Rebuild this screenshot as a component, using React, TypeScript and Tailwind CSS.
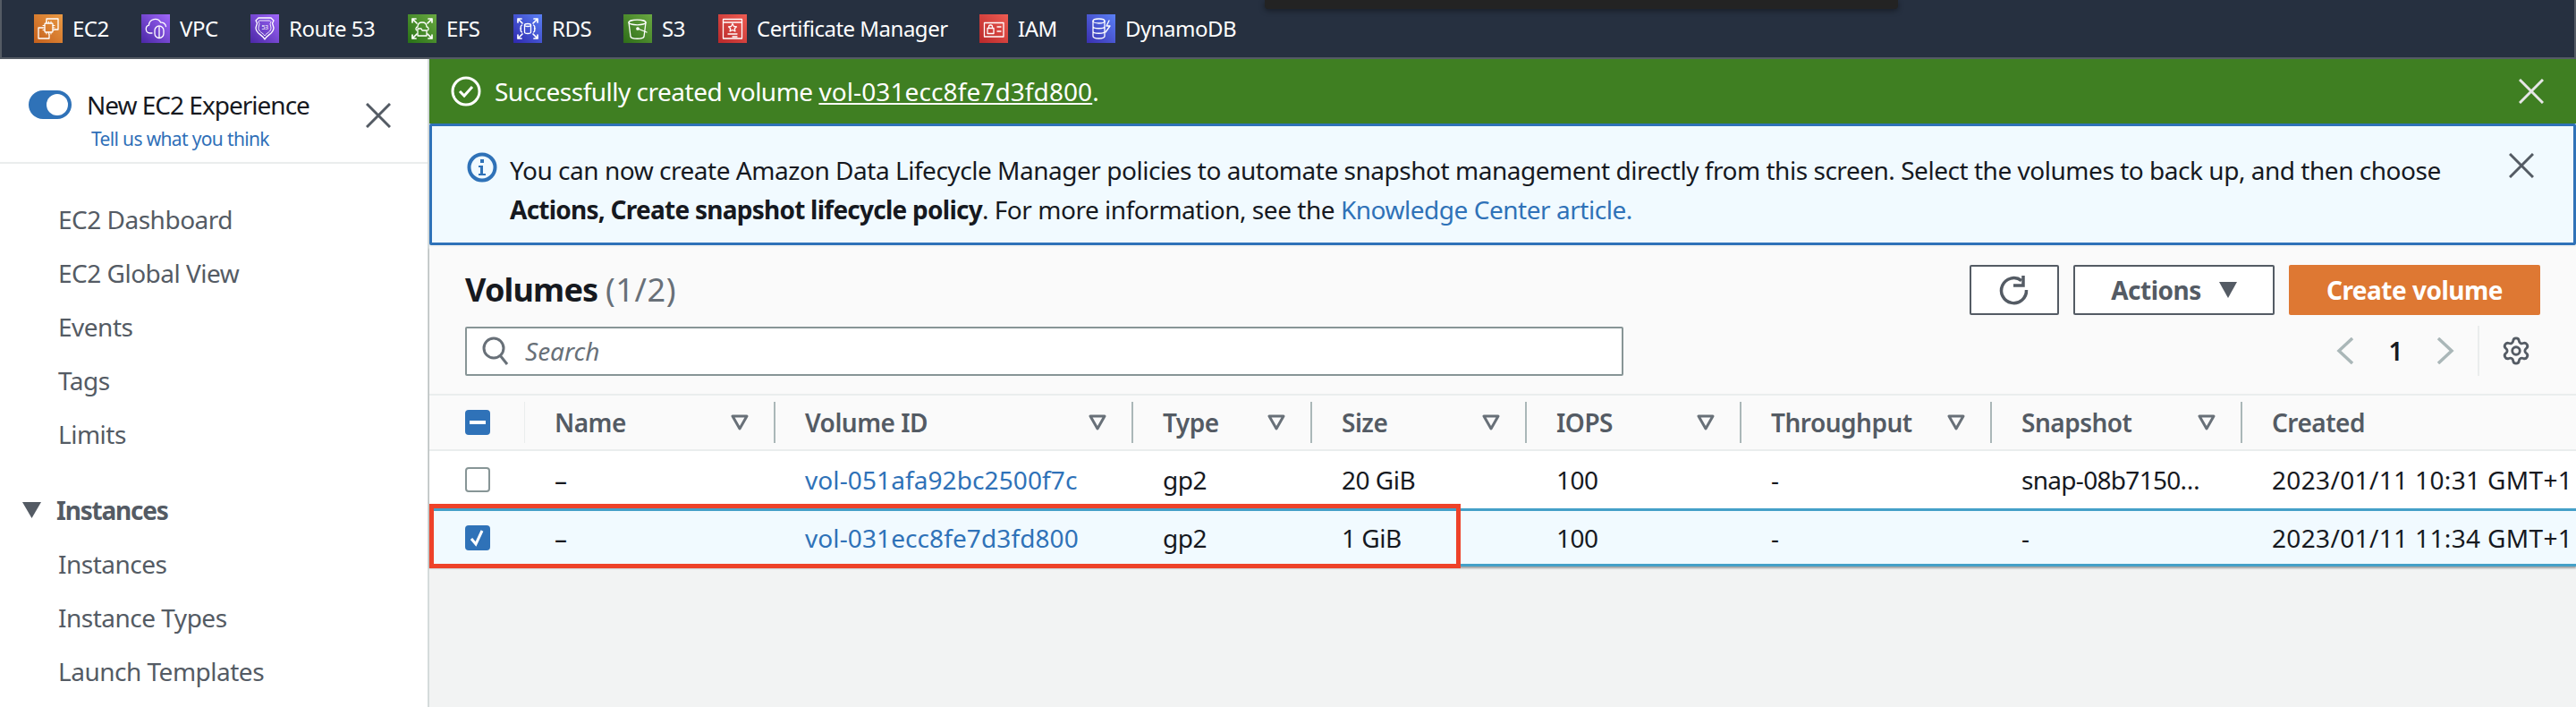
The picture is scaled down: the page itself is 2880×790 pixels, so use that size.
import React from "react";
import { Settings } from "lucide-react";

function Svc({ id, from, to, children }: { id: string; from: string; to: string; children: React.ReactNode }) {
  return (
    <svg width="32" height="32" viewBox="0 0 32 32" className="shrink-0">
      <defs>
        <linearGradient id={id} x1="0" y1="1" x2="1" y2="0">
          <stop offset="0" stopColor={from} />
          <stop offset="1" stopColor={to} />
        </linearGradient>
      </defs>
      <rect width="32" height="32" fill={`url(#${id})`} />
      <g fill="none" stroke="#fff" strokeWidth="1.3" strokeLinejoin="round" strokeLinecap="round">
        {children}
      </g>
    </svg>
  );
}

const Arrows = () => (
  <g strokeWidth="1.7">
    <path d="M5 5l5 5M5 5h4M5 5v4" />
    <path d="M27 5l-5 5M27 5h-4M27 5v4" />
    <path d="M5 27l5-5M5 27h4M5 27v-4" />
    <path d="M27 27l-5-5M27 27h-4M27 27v-4" />
  </g>
);

const services: { name: string; id: string; from: string; to: string; w: string; art: React.ReactNode }[] = [
  { name: "EC2", id: "a1", from: "#c5601c", to: "#ea9a44", w: "w-[120px]", art: (<><path d="M10 15H5v12h12v-5" /><path d="M14 9V5h13v12h-4" /><rect x="12" y="10" width="9" height="10" rx="1" /><path d="M14 8v2M16.500 8v2M19 8v2M14 20v2M16.500 20v2M19 20v2M10 12.500h2M10 15h2M10 17.500h2M21 12.500h2M21 15h2M21 17.500h2" strokeWidth="1" /></>) },
  { name: "VPC", id: "a2", from: "#4a27a5", to: "#a067fb", w: "w-[122px]", art: (<><path d="M12 21H9.500a4.500 4.500 0 0 1-1-8.800 7 7 0 0 1 13.200-3 5 5 0 0 1 5.800 4.300" /><rect x="15" y="13" width="10" height="13.500" rx="5" /><path d="M20 14v11.500" /></>) },
  { name: "Route 53", id: "a3", from: "#4a27a5", to: "#a067fb", w: "w-[176px]", art: (<><path d="M9 4h14l3 3-1.500 3 1.500 5c0 7-7 7-10 13-3-6-10-6-10-13l1.500-5L6 7z" /><path d="M10.500 7h11l1.500 1.500-1 2 1 4.500c0 5-5 5.500-7 9-2-3.500-7-4-7-9l1-4.500-1-2z" strokeWidth="0.9" /><text x="16" y="17" fontSize="7" textAnchor="middle" fill="#fff" stroke="none" fontFamily="Noto Sans">53</text></>) },
  { name: "EFS", id: "a4", from: "#277116", to: "#6aa942", w: "w-[118px]", art: (<><Arrows /><path d="M10 18c-2-1-1-4 1-4 0-3 2-5 5-5s5 2 5 5c2 0 3 3 1 4" /><path d="M11 24v-8h4l1 2h5v6z" /></>) },
  { name: "RDS", id: "a5", from: "#2e27ad", to: "#5a80f5", w: "w-[123px]", art: (<><Arrows /><ellipse cx="16" cy="12" rx="3.500" ry="1.500" /><path d="M12.500 12v8c0 2 7 2 7 0v-8" /><path d="M9.500 12c-1.500 1-1.500 2.500-1 3.500l-1 .5 1 .5c-.5 1-.5 2.500 1 3.500M22.500 12c1.500 1 1.500 2.500 1 3.500l1 .5-1 .5c.5 1 .5 2.500-1 3.500" /></>) },
  { name: "S3", id: "a6", from: "#2e6d18", to: "#6aa942", w: "w-[106px]", art: (<><ellipse cx="15.500" cy="9" rx="9.500" ry="2.800" /><path d="M6 9l2 16c1 3 14 3 15 0l2-16" /><path d="M16 16l10 4" /><circle cx="16" cy="16" r="1.200" fill="#fff" /></>) },
  { name: "Certificate Manager", id: "a7", from: "#b9282a", to: "#ee5c52", w: "w-[292px]", art: (<><path d="M5.500 27V5.500h21V27z" /><path d="M5.500 9h21" /><path d="M16 10.500l1.500 3 3 .4-2.200 2.100.6 3-2.900-1.500-2.900 1.500.6-3-2.200-2.100 3-.4z" /><path d="M11 22h10M16 25h5" /></>) },
  { name: "IAM", id: "a8", from: "#b9282a", to: "#ee5c52", w: "w-[120px]", art: (<><rect x="5.500" y="9.500" width="21.500" height="15.500" /><rect x="9" y="15.500" width="7" height="6" /><path d="M10.500 15.500v-1.500a2 2 0 0 1 4 0v1.500M20 14h4M20 19h4" /></>) },
  { name: "DynamoDB", id: "a9", from: "#3a2fb0", to: "#5a80f5", w: "", art: (<><ellipse cx="13.500" cy="7.500" rx="6.500" ry="2.500" /><path d="M7 7.500v17c0 3.300 13 3.300 13 0v-17M7 13.500c0 3 13 3 13 0M7 19c0 3 13 3 13 0" /><path d="M25 7l-3 6h4l-5 7" /></>) },
];

const Caret = () => (
  <svg width="20" height="18" viewBox="0 0 20 18" className="shrink-0">
    <path d="M2 2h16l-8 14z" fill="none" stroke="#687078" strokeWidth="3" strokeLinejoin="round" />
  </svg>
);

const X = ({ color, w = 2.4 }: { color: string; w?: number }) => (
  <svg width="28" height="28" viewBox="0 0 28 28" className="shrink-0">
    <path d="M1 1l26 26M27 1L1 27" stroke={color} strokeWidth={w} fill="none" />
  </svg>
);

const cols = "grid grid-cols-[107px_280px_400px_200px_240px_240px_280px_280px_373px]";

const heads = ["Name", "Volume ID", "Type", "Size", "IOPS", "Throughput", "Snapshot", "Created"];

const rowsData = [
  { sel: false, cells: ["–", "vol-051afa92bc2500f7c", "gp2", "20 GiB", "100", "-", "snap-08b7150…", "2023/01/11 10:31 GMT+1"] },
  { sel: true, cells: ["–", "vol-031ecc8fe7d3fd800", "gp2", "1 GiB", "100", "-", "-", "2023/01/11 11:34 GMT+1"] },
];

export default function App() {
  return (
    <div className="w-[2880px] h-[790px] overflow-hidden flex flex-col bg-[#f2f3f3] text-[28px] text-[#16191f] font-['Noto_Sans',sans-serif] tracking-[-0.5px] relative">
      <header className="h-[66px] shrink-0 bg-[#263040] border-b-2 border-[#545b64] flex items-center text-white text-[24px] border-l-2 border-r-2 pl-[36px] relative">
        {services.map((s) => (
          <div key={s.name} className={`flex items-center gap-[11px] ${s.w}`}>
            <Svc id={s.id} from={s.from} to={s.to}>{s.art}</Svc>
            <span>{s.name}</span>
          </div>
        ))}
        <div className="absolute left-[1412px] top-0 w-[708px] h-[10px] bg-[#232323] rounded-b shadow-[0_2px_6px_rgba(0,0,0,0.4)]" />
      </header>
      <div className="flex flex-1 min-h-0">
        <aside className="w-[480px] shrink-0 bg-white border-r-2 border-[#d5dbdb] text-[#545b64] flex flex-col">
          <div className="h-[117px] border-b-2 border-[#eaeded] shrink-0 pl-[32px] pr-[44px] pt-[30px] relative">
            <div className="flex items-center gap-[17px] text-[#16191f]">
              <div className="w-[48px] h-[32px] rounded-full bg-[#2f72b8] flex items-center justify-end pr-[4px]">
                <div className="w-[24px] h-[24px] rounded-full bg-white" />
              </div>
              <span className="tracking-[-1px]">New EC2 Experience</span>
            </div>
            <div className="pl-[70px] mt-[2px] text-[21px] text-[#2f6fb8] leading-[30px] tracking-[-0.65px]">Tell us what you think</div>
            <div className="absolute left-[409px] top-[49px]"><X color="#545b64" w={3} /></div>
          </div>
          <nav className="pl-[65px] pt-[32px] flex flex-col">
            {["EC2 Dashboard", "EC2 Global View", "Events", "Tags", "Limits"].map((t) => (
              <div key={t} className="h-[60px] flex items-center">{t}</div>
            ))}
            <div className="h-[60px] mt-[25px] flex items-center font-bold -ml-[40px] gap-[17px]">
              <svg width="21" height="18" viewBox="0 0 21 18"><path d="M0 0h21L10.500 18z" fill="#545b64" /></svg>
              <span className="tracking-[-1.2px]">Instances</span>
            </div>
            {["Instances", "Instance Types", "Launch Templates"].map((t) => (
              <div key={t} className="h-[60px] flex items-center">{t}</div>
            ))}
          </nav>
        </aside>
        <main className="flex-1 min-w-0 flex flex-col">
          <div className="h-[72px] shrink-0 bg-[#3f7f22] text-white flex items-center pl-[24px] pr-[36px] gap-[15px]">
            <svg width="34" height="34" viewBox="0 0 34 34" className="shrink-0">
              <circle cx="17" cy="17" r="15" fill="none" stroke="#fff" strokeWidth="3" />
              <path d="M10 17l5 5 9-10" fill="none" stroke="#fff" strokeWidth="3" />
            </svg>
            <span>Successfully created volume <span className="underline tracking-[0.1px]">vol-031ecc8fe7d3fd800</span>.</span>
            <div className="ml-auto"><X color="#e6e6e6" w={3} /></div>
          </div>
          <div className="h-[136px] shrink-0 bg-[#f1faff] border-[3px] border-[#2f72b8] rounded-[2px] flex pl-[39px] pr-[44px] pt-[27px]">
            <svg width="34" height="34" viewBox="0 0 34 34" className="shrink-0 mt-[2px]">
              <circle cx="17" cy="17" r="14.500" fill="none" stroke="#2f72b8" strokeWidth="4" />
              <rect x="15" y="8" width="4" height="4" fill="#2f72b8" />
              <path d="M13 15h5v9h3v2h-8v-2h2v-7h-2z" fill="#2f72b8" />
            </svg>
            <div className="ml-[14px] leading-[44px] w-[2190px] tracking-[-0.47px]">
              You can now create Amazon Data Lifecycle Manager policies to automate snapshot management directly from this screen. Select the volumes to back up, and then choose <span className="font-bold tracking-[-0.75px]">Actions, Create snapshot lifecycle policy</span>. For more information, see the <span className="text-[#2f72b8]">Knowledge Center article.</span>
            </div>
            <div className="ml-auto mt-[3px]"><X color="#545b64" w={3} /></div>
          </div>
          <section className="relative bg-[#fafafa] mt-[2px] shadow-[0_2px_2px_rgba(0,0,0,0.35)]">
            <div className="h-[166px] border-b-2 border-[#eaeded] pl-[40px] pr-[40px] flex flex-col">
              <div className="flex items-center justify-between pt-[20px]">
                <h1 className="text-[36px] leading-[56px] font-bold tracking-[-0.8px]">Volumes <span className="font-normal text-[#687078] tracking-[0.6px]">(1/2)</span></h1>
                <div className="flex gap-[16px]">
                  <button className="w-[100px] h-[56px] bg-white border-2 border-[#545b64] rounded-[2px] flex items-center justify-center">
                    <svg width="36" height="36" viewBox="0 0 36 36"><path d="M26 7.500A14 14 0 1 0 31.500 18" fill="none" stroke="#545b64" strokeWidth="3.500" /><path d="M28 2v11H17" fill="none" stroke="#545b64" strokeWidth="3.500" /></svg>
                  </button>
                  <button className="w-[225px] h-[56px] bg-white border-2 border-[#545b64] rounded-[2px] flex items-center justify-center gap-[20px] font-bold text-[#545b64]">
                    Actions
                    <svg width="20" height="18" viewBox="0 0 20 18"><path d="M0 0h20L10 18z" fill="#545b64" /></svg>
                  </button>
                  <button className="w-[281px] h-[56px] bg-[#de7833] rounded-[2px] text-white font-bold">Create volume</button>
                </div>
              </div>
              <div className="flex items-center mt-[12px]">
                <div className="w-[1295px] h-[55px] bg-white border-2 border-[#879596] rounded-[2px] flex items-center pl-[17px] gap-[18px] text-[#687078] italic tracking-[0px]">
                  <svg width="30" height="32" viewBox="0 0 30 32" className="shrink-0"><circle cx="13" cy="13" r="11" fill="none" stroke="#687078" strokeWidth="3" /><path d="M20 21l8 10" stroke="#687078" strokeWidth="3" /></svg>
                  <span>Search</span>
                </div>
                <div className="ml-auto flex items-center h-[56px] mr-[10px]">
                  <svg width="20" height="30" viewBox="0 0 20 30"><path d="M18 1L3 15l15 14" fill="none" stroke="#aab7b8" strokeWidth="3.500" /></svg>
                  <span className="mx-[38px] font-semibold">1</span>
                  <svg width="20" height="30" viewBox="0 0 20 30"><path d="M2 1l15 14L2 29" fill="none" stroke="#aab7b8" strokeWidth="3.500" /></svg>
                  <div className="w-[2px] h-[56px] bg-[#eaeded] ml-[26px] mr-[24px]" />
                  <Settings size={34} color="#545b64" strokeWidth={2} />
                </div>
              </div>
            </div>
            <div className={`${cols} h-[62px] border-b-2 border-[#eaeded] font-semibold text-[#545b64] items-center`}>
              <div className="h-[46px] pl-[40px] flex items-center border-r border-[#eaeded]">
                <div className="w-[28px] h-[28px] rounded bg-[#2f72b8] flex items-center justify-center"><div className="w-[18px] h-[4px] bg-white" /></div>
              </div>
              {heads.map((h, i) => (
                <div key={h} className={`h-[46px] flex items-center pl-[33px] pr-[28px] justify-between ${i < 7 ? "border-r-2 border-[#aab7b8]" : ""}`}>
                  <span>{h}</span>
                  {i < 7 && <Caret />}
                </div>
              ))}
            </div>
            {rowsData.map((r) => (
              <div key={r.cells[1]} className={`${cols} items-center ${r.sel ? "h-[65px] bg-[#f1faff] border-y-[3px] border-[#44a0c8]" : "h-[64px] bg-white"}`}>
                <div className="pl-[40px]">
                  {r.sel ? (
                    <div className="w-[28px] h-[28px] rounded bg-[#2f72b8] flex items-center justify-center">
                      <svg width="20" height="20" viewBox="0 0 20 20"><path d="M3 11l5 6L15 2" fill="none" stroke="#fff" strokeWidth="3" /></svg>
                    </div>
                  ) : (
                    <div className="w-[28px] h-[28px] rounded border-2 border-[#879596] bg-white" />
                  )}
                </div>
                {r.cells.map((c, i) => (
                  <div key={i} className={`pl-[33px] whitespace-nowrap ${i === 1 ? "text-[#2f72b8] tracking-[0.1px]" : ""} ${i === 7 ? "tracking-[0.35px]" : ""} ${i === 6 ? "tracking-[-0.7px]" : ""}`}>{c}</div>
                ))}
              </div>
            ))}
            <div className="absolute left-0 top-[287px] w-[1153px] h-[72px] border-[5px] border-[#ee4229] pointer-events-none" />
          </section>
        </main>
      </div>
    </div>
  );
}
